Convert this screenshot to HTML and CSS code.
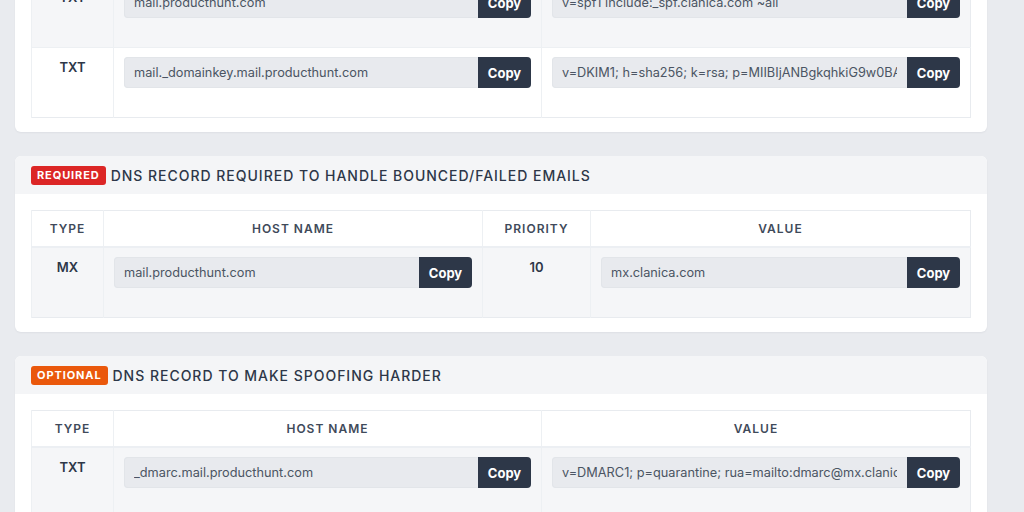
FILE: index.html
```html
<!DOCTYPE html>
<html lang="en">
<head>
<meta charset="utf-8">
<title>DNS records</title>
<link rel="stylesheet" href="styles.css">
</head>
<body>
<main class="page">
  <section class="card card-first">
    <header class="card-head">
      <span class="badge badge-required">Required</span>
      <h2 class="card-title">DNS records required to send emails</h2>
    </header>
    <div class="card-body">
      <table class="dns">
        <colgroup><col class="c-type3"><col class="c-host3"><col></colgroup>
        <thead>
          <tr><th>Type</th><th>Host name</th><th>Value</th></tr>
        </thead>
        <tbody>
          <tr>
            <td class="type">TXT</td>
            <td><div class="field"><span class="field-text">mail.producthunt.com</span><button class="copy">Copy</button></div></td>
            <td><div class="field"><span class="field-text">v=spf1 include:_spf.clanica.com ~all</span><button class="copy">Copy</button></div></td>
          </tr>
          <tr>
            <td class="type">TXT</td>
            <td><div class="field"><span class="field-text">mail._domainkey.mail.producthunt.com</span><button class="copy">Copy</button></div></td>
            <td><div class="field"><span class="field-text">v=DKIM1; h=sha256; k=rsa; p=MIIBIjANBgkqhkiG9w0BAQEFAAOCAQ8AMIIBCgKCAQEA</span><button class="copy">Copy</button></div></td>
          </tr>
        </tbody>
      </table>
    </div>
  </section>

  <section class="card">
    <header class="card-head">
      <span class="badge badge-required">Required</span>
      <h2 class="card-title">DNS record required to handle bounced/failed emails</h2>
    </header>
    <div class="card-body">
      <table class="dns">
        <colgroup><col class="c-type4"><col class="c-host4"><col class="c-prio"><col></colgroup>
        <thead>
          <tr><th>Type</th><th>Host name</th><th>Priority</th><th>Value</th></tr>
        </thead>
        <tbody>
          <tr>
            <td class="type">MX</td>
            <td><div class="field"><span class="field-text">mail.producthunt.com</span><button class="copy">Copy</button></div></td>
            <td class="type">10</td>
            <td><div class="field"><span class="field-text">mx.clanica.com</span><button class="copy">Copy</button></div></td>
          </tr>
        </tbody>
      </table>
    </div>
  </section>

  <section class="card">
    <header class="card-head">
      <span class="badge badge-optional">Optional</span>
      <h2 class="card-title">DNS record to make spoofing harder</h2>
    </header>
    <div class="card-body">
      <table class="dns">
        <colgroup><col class="c-type3"><col class="c-host3"><col></colgroup>
        <thead>
          <tr><th>Type</th><th>Host name</th><th>Value</th></tr>
        </thead>
        <tbody>
          <tr>
            <td class="type">TXT</td>
            <td><div class="field"><span class="field-text">_dmarc.mail.producthunt.com</span><button class="copy">Copy</button></div></td>
            <td><div class="field"><span class="field-text">v=DMARC1; p=quarantine; rua=mailto:dmarc@mx.clanica.com</span><button class="copy">Copy</button></div></td>
          </tr>
        </tbody>
      </table>
    </div>
  </section>
</main>
</body>
</html>
```

FILE: styles.css
```css
html, body {
  margin: 0;
  padding: 0;
  background: #e9ebef;
  font-family: Inter, "Noto Sans", sans-serif;
  color: #2d3748;
  overflow: hidden;
}

.page {
  display: flex;
  flex-direction: column;
  gap: 24px;
  padding: 0 37px 40px 15px;
}

.card {
  background: #ffffff;
  border-radius: 6px;
  box-shadow: 0 1px 2px rgba(15, 23, 42, 0.05);
}

.card-first {
  margin-top: -114px;
}

.card-head {
  height: 38px;
  display: flex;
  align-items: center;
  gap: 5px;
  padding: 0 16px;
  background: #f4f5f7;
  border-radius: 6px 6px 0 0;
}

.badge {
  display: inline-flex;
  align-items: center;
  height: 19px;
  padding: 0 6px;
  border-radius: 3px;
  color: #ffffff;
  font-size: 11px;
  font-weight: 700;
  letter-spacing: 0.9px;
  text-transform: uppercase;
}

.badge-required { background: #dc2626; }
.badge-optional { background: #ea580c; }

.card-title {
  margin: 0;
  font-size: 14px;
  font-weight: 500;
  letter-spacing: 0.98px;
  text-transform: uppercase;
  color: #2d3748;
}

.card-body {
  padding: 16px 16px 14px;
}

.dns {
  width: 100%;
  border-collapse: collapse;
  table-layout: fixed;
  border: 1px solid #e8ebef;
}

.c-type3 { width: 82px; }
.c-host3 { width: 428px; }
.c-type4 { width: 72px; }
.c-host4 { width: 379px; }
.c-prio { width: 108px; }

.dns th {
  padding: 11px 10px;
  font-size: 12px;
  line-height: 13px;
  font-weight: 600;
  letter-spacing: 1px;
  text-transform: uppercase;
  color: #3f4a5a;
  text-align: center;
  border-left: 1px solid #edf0f3;
  border-bottom: 2px solid #eceff3;
  background: #ffffff;
}

.dns td {
  padding: 9px 10px 29px;
  vertical-align: top;
  border-left: 1px solid #edf0f3;
  border-top: 1px solid #edf0f3;
}

.dns tbody tr:nth-child(odd) td { background: #f5f6f8; }
.dns tbody tr:nth-child(even) td { background: #ffffff; }

.dns td.type {
  padding-top: 11px;
  text-align: center;
  font-size: 13px;
  line-height: 17px;
  font-weight: 600;
  color: #2d3748;
}

.field {
  display: flex;
  height: 31px;
  border-radius: 4px;
  background: #e8eaee;
  box-shadow: inset 0 0 0 1px #e2e5e9;
}

.field-text {
  flex: 1;
  min-width: 0;
  margin: 0 10px;
  overflow: hidden;
  white-space: nowrap;
  text-overflow: clip;
  align-self: center;
  font-size: 12.75px;
  color: #4b5563;
}

.copy {
  flex: none;
  width: 53px;
  border: 0;
  border-radius: 0 4px 4px 0;
  background: #2d3748;
  color: #ffffff;
  font-family: Inter, "Noto Sans", sans-serif;
  font-size: 13px;
  font-weight: 700;
  padding: 0;
  cursor: pointer;
}
```
